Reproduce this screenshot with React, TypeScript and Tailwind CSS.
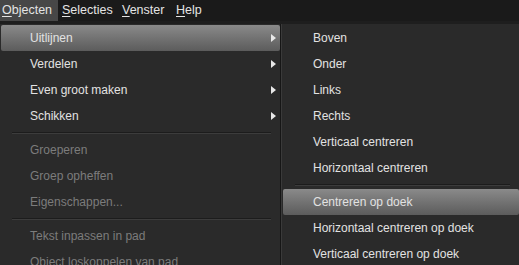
import React from 'react';

type Item = { label: string; sub?: boolean; disabled?: boolean; active?: boolean } | 'sep';

const leftItems: Item[] = [
  { label: 'Uitlijnen', sub: true, active: true },
  { label: 'Verdelen', sub: true },
  { label: 'Even groot maken', sub: true },
  { label: 'Schikken', sub: true },
  'sep',
  { label: 'Groeperen', disabled: true },
  { label: 'Groep opheffen', disabled: true },
  { label: 'Eigenschappen...', disabled: true },
  'sep',
  { label: 'Tekst inpassen in pad', disabled: true },
  { label: 'Object loskoppelen van pad', disabled: true },
];

const rightItems: Item[] = [
  { label: 'Boven' },
  { label: 'Onder' },
  { label: 'Links' },
  { label: 'Rechts' },
  { label: 'Verticaal centreren' },
  { label: 'Horizontaal centreren' },
  'sep',
  { label: 'Centreren op doek', active: true },
  { label: 'Horizontaal centreren op doek' },
  { label: 'Verticaal centreren op doek' },
];

function Arrow() {
  return (
    <svg width="5" height="8" viewBox="0 0 5 8" className="shrink-0">
      <path d="M0 0 L5 4 L0 8 Z" fill="#e8e8e8" />
    </svg>
  );
}

function MenuRow({ item, indent }: { item: Exclude<Item, 'sep'>; indent: string }) {
  const color = item.disabled ? 'text-[#7c7c7c]' : 'text-[#e2e2e2]';
  const bg = item.active ? 'bg-gradient-to-b from-[#8a8a8a] to-[#5c5c5c] rounded-[2px]' : '';
  return (
    <div className={`h-[26px] flex items-center pr-[4px] ${indent} ${bg} ${color}`}>
      <span className="flex-1 whitespace-nowrap">{item.label}</span>
      {item.sub && <Arrow />}
    </div>
  );
}

function Separator({ className }: { className: string }) {
  return (
    <div className="h-[8px] flex items-center">
      <div className={`h-[2px] border-t border-[#1c1c1c] bg-[#3c3c3c] ${className}`} />
    </div>
  );
}

function Mnemonic({ first, rest }: { first: string; rest: string }) {
  return (
    <span>
      <span className="underline underline-offset-2">{first}</span>
      {rest}
    </span>
  );
}

export default function App() {
  return (
    <div
      className="w-[519px] h-[265px] overflow-hidden bg-[#2a2a2a] text-[12px]"
      style={{ fontFamily: '"Liberation Sans", Arial, sans-serif' }}
    >
      <div className="h-[21px] bg-[#1a1a1a] flex items-stretch text-[#e4e4e4] text-[12.5px]">
        <div className="w-[58px] bg-[#474747] pl-[2px] flex items-center">
          <Mnemonic first="O" rest="bjecten" />
        </div>
        <div className="pl-[4px] w-[64px] flex items-center">
          <Mnemonic first="S" rest="electies" />
        </div>
        <div className="w-[54px] flex items-center">
          <Mnemonic first="V" rest="enster" />
        </div>
        <div className="flex items-center">
          <Mnemonic first="H" rest="elp" />
        </div>
      </div>
      <div className="h-[3px] bg-[#1e1e1e]" />
      <div className="flex">
        <div className="w-[281px] pt-[1px] pl-[1px] border-r border-[#161616]">
          {leftItems.map((it, i) =>
            it === 'sep' ? (
              <Separator key={i} className="ml-[11px] w-[259px]" />
            ) : (
              <MenuRow key={i} item={it} indent="pl-[29px]" />
            )
          )}
        </div>
        <div className="flex-1 pt-[1px] pl-[1px] border-l border-[#3a3a3a]">
          {rightItems.map((it, i) =>
            it === 'sep' ? (
              <Separator key={i} className="ml-[12px] w-[215px]" />
            ) : (
              <MenuRow key={i} item={it} indent="pl-[30px]" />
            )
          )}
        </div>
      </div>
    </div>
  );
}
